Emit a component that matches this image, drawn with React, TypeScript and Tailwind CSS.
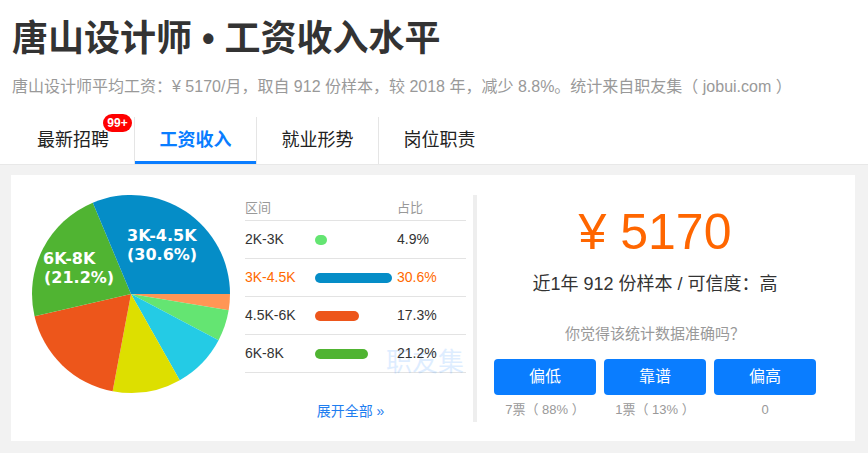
import React from 'react';

const font = '"Liberation Sans", "Noto Sans CJK SC", sans-serif';

// pie slices, degrees clockwise from 3 o'clock
const slices = [
  { from: 0, to: 9.5, color: '#FF9655' },
  { from: 9.5, to: 27.8, color: '#64E572' },
  { from: 27.8, to: 60.5, color: '#24CBE5' },
  { from: 60.5, to: 100.7, color: '#DDDF00' },
  { from: 100.7, to: 167, color: '#ED561B' },
  { from: 167, to: 247.3, color: '#50B432' },
  { from: 247.3, to: 360, color: '#058DC7' },
];

const rows = [
  { range: '2K-3K', pct: 4.9, color: '#64E572' },
  { range: '3K-4.5K', pct: 30.6, color: '#058DC7', active: true },
  { range: '4.5K-6K', pct: 17.3, color: '#ED561B' },
  { range: '6K-8K', pct: 21.2, color: '#50B432' },
];

const votes = [
  { label: '偏低', count: '7票（ 88% ）' },
  { label: '靠谱', count: '1票（ 13% ）' },
  { label: '偏高', count: '0' },
];

function slicePath(from: number, to: number, cx: number, cy: number, r: number) {
  const a1 = (from * Math.PI) / 180;
  const a2 = (to * Math.PI) / 180;
  const x1 = cx + r * Math.cos(a1);
  const y1 = cy + r * Math.sin(a1);
  const x2 = cx + r * Math.cos(a2);
  const y2 = cy + r * Math.sin(a2);
  const large = to - from > 180 ? 1 : 0;
  return `M${cx} ${cy} L${x1} ${y1} A${r} ${r} 0 ${large} 1 ${x2} ${y2} Z`;
}

function Pie() {
  return (
    <svg width={220} height={220} viewBox="0 0 220 220">
      {slices.map((s, i) => (
        <path key={i} d={slicePath(s.from, s.to, 110, 110, 99)} fill={s.color} />
      ))}
      <g fill="#fff" fontFamily='"DejaVu Sans", sans-serif' fontWeight="bold" fontSize="16">
        <text x={106} y={57}>3K-4.5K</text>
        <text x={106} y={76}>(30.6%)</text>
        <text x={22} y={80}>6K-8K</text>
        <text x={23} y={99}>(21.2%)</text>
      </g>
    </svg>
  );
}

const tabs = ['最新招聘', '工资收入', '就业形势', '岗位职责'];

export default function App() {
  return (
    <div className="w-[868px] h-[453px] overflow-hidden bg-white text-[#333]" style={{ fontFamily: font }}>
      <div className="px-[12px]">
        <h1 className="pt-[17px] text-[36px] font-bold leading-[44px] text-[#333]">唐山设计师 • 工资收入水平</h1>
        <p className="mt-[16px] text-[16px] leading-[20px] text-[#999]">
          唐山设计师平均工资：¥ 5170/月，取自 912 份样本，较 2018 年，减少 8.8%。统计来自职友集（ jobui.com ）
        </p>
        <div className="mt-[20px] flex h-[47px]">
          {tabs.map((t, i) => (
            <div
              key={t}
              className={`relative flex w-[122px] items-center justify-center text-[18px] ${i > 0 ? 'border-l border-[#e5e5e5]' : ''} ${i === 1 ? 'font-bold text-[#0a7dff]' : 'text-[#222]'}`}
            >
              <span className="mt-[-1px]">{t}</span>
              {i === 1 && <div className="absolute bottom-0 left-0 right-0 h-[3px] bg-[#0a7dff]" />}
              {i === 0 && (
                <span className="absolute left-[91px] top-[-3px] flex h-[18px] w-[29px] items-center justify-center rounded-full bg-[#f00] text-[12px] font-bold leading-none text-white">
                  99+
                </span>
              )}
            </div>
          ))}
        </div>
      </div>

      <div className="h-full border-t border-[#e8e8e8] bg-[#f2f2f2] pl-[11px] pr-[13px] pt-[10px]">
        <div className="flex h-[266px] bg-white">
          <div className="w-[230px] pl-[10px] pt-[9px]">
            <Pie />
          </div>

          <div className="relative ml-[4px] mt-[20px] w-[221px] text-[14px]">
            <div className="flex h-[26px] items-center border-b border-[#e3e3e3] text-[13px] text-[#999]">
              <span className="w-[152px]">区间</span>
              <span>占比</span>
            </div>
            {rows.map((r) => (
              <div
                key={r.range}
                className={`flex h-[38px] items-center border-b border-[#e3e3e3] ${r.active ? 'text-[#ff6a00]' : 'text-[#333]'}`}
              >
                <span className="w-[70px]">{r.range}</span>
                <span className="w-[82px]">
                  <span
                    className="block h-[10px] rounded-full"
                    style={{ width: Math.max(r.pct * 2.52, 12), background: r.color }}
                  />
                </span>
                <span className="relative z-10">{r.pct}%</span>
              </div>
            ))}
            <div className="pointer-events-none absolute left-[141px] top-[154px] text-[26px] leading-none text-[#0a7dff] opacity-[0.13]">
              职友集
            </div>
            <div className="mt-[30px] pr-[10px] text-center text-[14px] leading-[16px] text-[#1f7ef0]">展开全部 »</div>
          </div>

          <div className="ml-[7px] mt-[20px] h-[227px] w-[4px] bg-[#eeeeee]" />

          <div className="ml-[17px] flex w-[322px] flex-col items-center">
            <div className="mt-[32px] text-[50px] leading-[50px] text-[#ff6600]">¥ 5170</div>
            <div className="mt-[16px] text-[18px] leading-[22px] text-[#333]">近1年 912 份样本 / 可信度：高</div>
            <div className="mt-[30px] text-[15px] leading-[18px] text-[#999]">你觉得该统计数据准确吗？</div>
            <div className="mt-[16px] flex w-full gap-[8px]">
              {votes.map((v) => (
                <div key={v.label} className="flex flex-1 flex-col items-center">
                  <button className="flex h-[36px] w-full items-center justify-center rounded-[4px] bg-[#0a7dff] text-[16px] text-white">
                    {v.label}
                  </button>
                  <span className="mt-[7px] text-[13px] leading-[16px] text-[#999]">{v.count}</span>
                </div>
              ))}
            </div>
          </div>
        </div>
      </div>
    </div>
  );
}
